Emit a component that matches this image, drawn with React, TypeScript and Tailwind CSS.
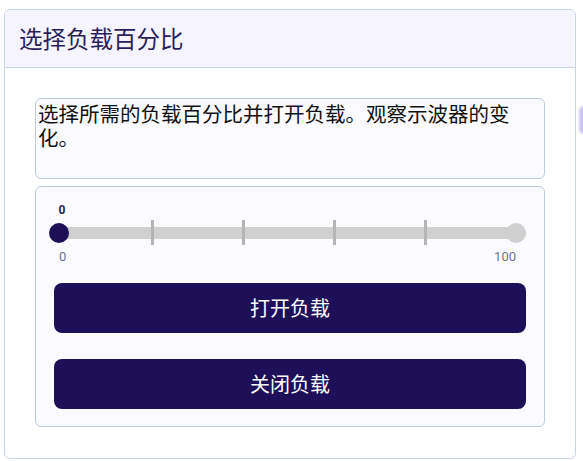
export default function App() {
  const ticks = [97, 188, 279, 370];
  return (
    <div className="relative w-[583px] h-[461px] bg-white overflow-hidden font-['Noto_Sans_CJK_SC',sans-serif]">
      <div className="absolute right-[-6px] top-[106px] w-[10px] h-[28px] rounded-full bg-[#cdc4f6] blur-[1px]" />
      <div className="ml-[4px] mt-[9px] w-[572px] h-[450px] border border-[#c8d4e4] rounded-md overflow-hidden">
        <div className="h-[58px] bg-[#f6f4fe] border-b border-[#c8d4e4] flex items-center pl-[14px]">
          <h1 className="text-[23.5px] text-[#2a1f5c]">选择负载百分比</h1>
        </div>
        <div className="px-[30px] pt-[30px] flex flex-col gap-[7px]">
          <div className="h-[81px] border border-[#bccbdd] rounded-md bg-[#fafaff] pl-[2px] pr-[26px] pt-[2px] text-[20.5px] leading-[24px] text-[#111]">
            选择所需的负载百分比并打开负载。观察示波器的变化。
          </div>
          <div className="h-[241px] border border-[#bccbdd] rounded-md bg-[#fafaff] px-[18px] pt-[15px] flex flex-col">
            <div className="flex flex-col font-['Roboto',sans-serif]">
              <span className="w-[16px] text-center text-[12px] leading-[16px] font-bold text-[#2a1f5c]">0</span>
              <div className="relative h-[26px] mt-[2px] flex items-center">
                <div className="w-full h-[12px] rounded-full bg-[#d0d0d0]" />
                {ticks.map((x) => (
                  <div key={x} className="absolute top-0 w-[3px] h-[25px] bg-[#b4b4b4]" style={{ left: x }} />
                ))}
                <div className="absolute right-0 w-[20px] h-[20px] rounded-full bg-[#d0d0d0]" />
                <div className="absolute left-[-5px] w-[20px] h-[20px] rounded-full bg-[#1e1058]" />
              </div>
              <div className="flex justify-between text-[13px] leading-[18px] text-[#6b7590] mt-[2px] pl-[5px] pr-[10px]">
                <span>0</span>
                <span>100</span>
              </div>
            </div>
            <div className="flex flex-col gap-[26px] mt-[17px]">
              <button className="h-[50px] rounded-lg bg-[#1e1058] text-white text-[20px]">打开负载</button>
              <button className="h-[50px] rounded-lg bg-[#1e1058] text-white text-[20px]">关闭负载</button>
            </div>
          </div>
        </div>
      </div>
    </div>
  );
}
